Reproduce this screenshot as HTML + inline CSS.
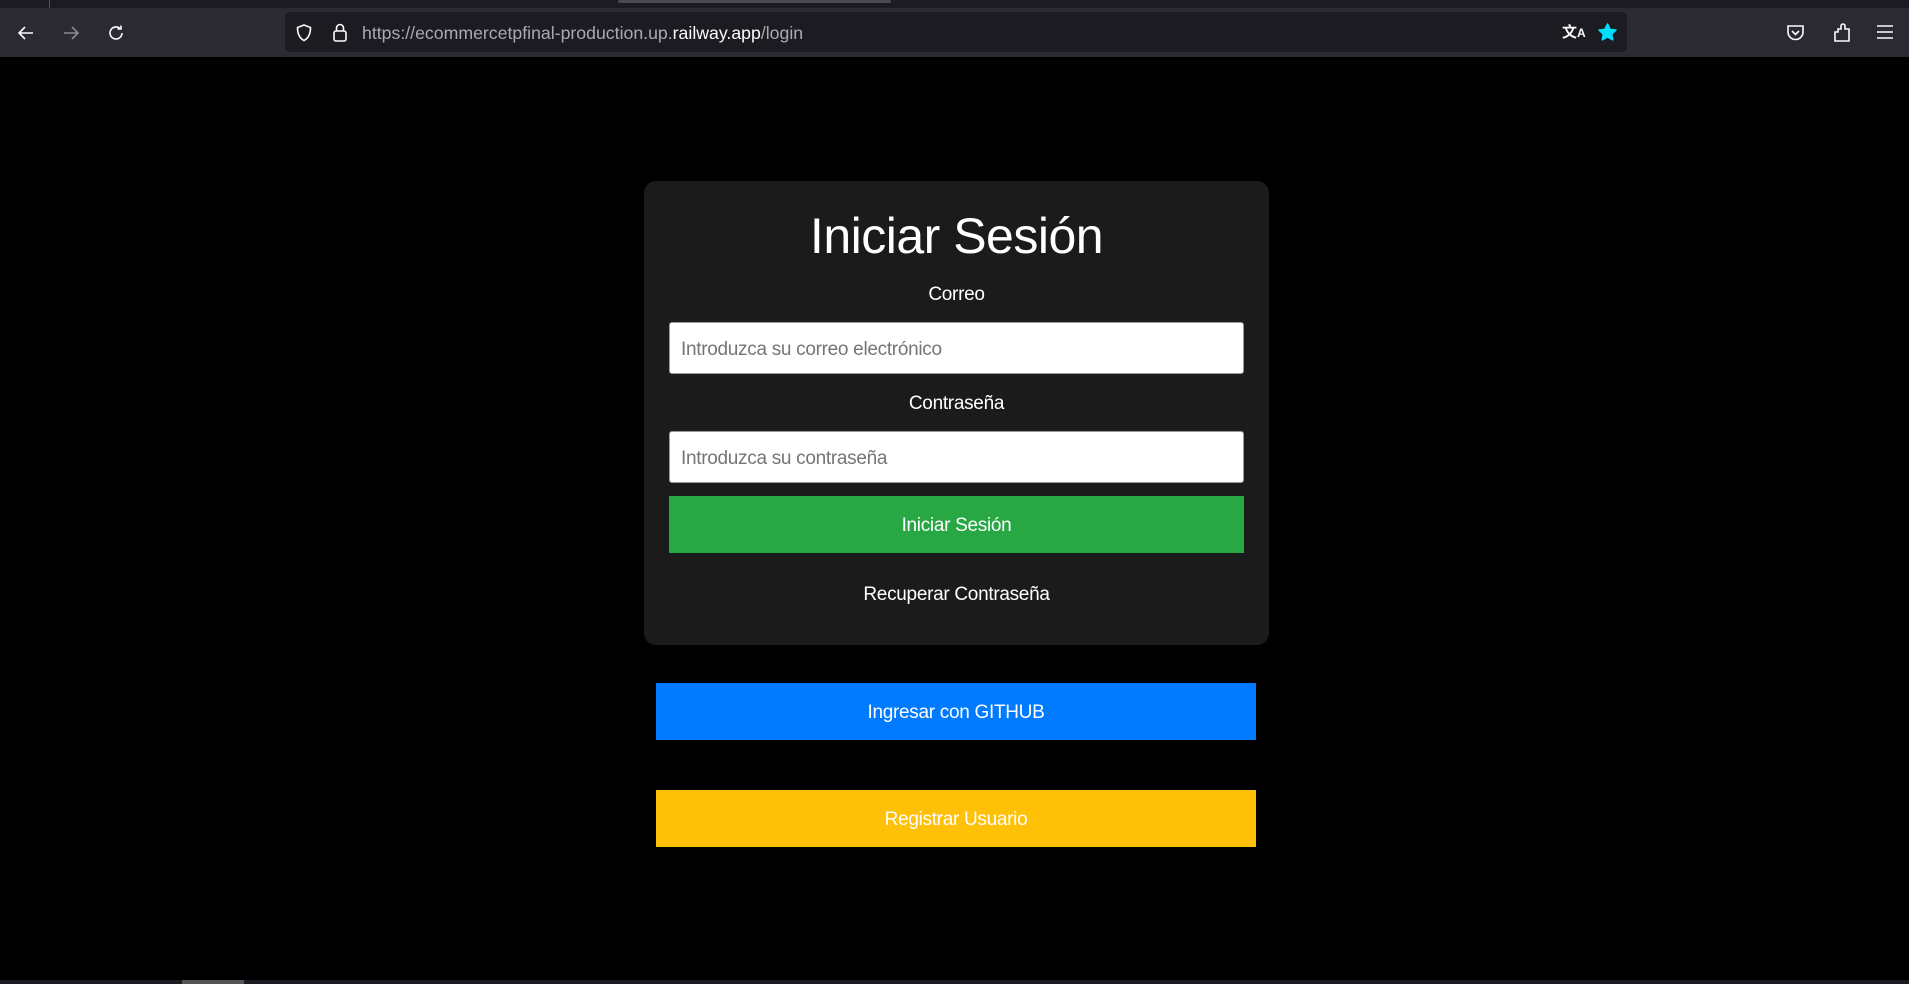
<!DOCTYPE html>
<html><head><meta charset="utf-8"><style>
*{box-sizing:border-box;margin:0;padding:0}
body{width:1909px;height:984px;background:#000;font-family:"Liberation Sans",Arial,sans-serif;position:relative;overflow:hidden}
.abs{position:absolute}
.top{left:0;top:0;width:1909px;height:8px;background:#1c1b22}
.tb{left:0;top:8px;width:1909px;height:49px;background:#2b2a33}
.url{left:285px;top:12px;width:1342px;height:40px;background:#1c1b22;border-radius:5px}
.urltext{left:362px;top:23px;font-size:17.7px;color:#a9a9b0;white-space:nowrap}
.urltext b{font-weight:normal;color:#fbfbfe}
svg{position:absolute}
.card{left:644px;top:181px;width:625px;height:464px;background:#1b1b1b;border-radius:12px}
.c{position:absolute;left:644px;width:625px;text-align:center;color:#fff}
.inp{left:669px;width:575px;height:52px;background:#fff;border:1px solid #999;border-radius:3px;font-size:19px;color:#757575;padding:16px 0 0 11px;letter-spacing:-0.3px}
.btn{color:#fff;font-size:19px;text-align:center;letter-spacing:-0.3px}
</style></head><body>
<div class="abs top"></div>
<div class="abs" style="left:618px;top:0;width:273px;height:3px;background:#4a4950;border-radius:2px"></div>
<div class="abs" style="left:49px;top:0;width:1px;height:8px;background:#555"></div>
<div class="abs tb"></div>
<div class="abs url"></div>
<svg style="left:16px;top:23px" width="20" height="20" viewBox="0 0 20 20" fill="none" stroke="#fbfbfe" stroke-width="1.6"><path d="M17 10H3M9 4L3 10l6 6"/></svg>
<svg style="left:61px;top:23px" width="20" height="20" viewBox="0 0 20 20" fill="none" stroke="#8a8990" stroke-width="1.6"><path d="M3 10h14M11 4l6 6-6 6"/></svg>
<svg style="left:106px;top:23px" width="20" height="20" viewBox="0 0 20 20" fill="none" stroke="#fbfbfe" stroke-width="1.6"><path d="M16 10a6 6 0 1 1-2-4.5M15 2.5v3.5h-3.5"/></svg>
<svg style="left:295px;top:23px" width="18" height="20" viewBox="0 0 18 20" fill="none" stroke="#fbfbfe" stroke-width="1.6"><path d="M9 2l6.5 2.5c0 7-2.5 11-6.5 13C5 15.5 2.5 11.5 2.5 4.5z"/></svg>
<svg style="left:332px;top:22px" width="16" height="21" viewBox="0 0 16 21" fill="none" stroke="#fbfbfe" stroke-width="1.6"><rect x="2" y="9" width="12" height="10" rx="2"/><path d="M4.5 9V6a3.5 3.5 0 0 1 7 0v3"/></svg>
<div class="abs urltext">https://ecommercetpfinal-production.up.<b>railway.app</b>/login</div>
<div class="abs" style="left:1562px;top:21px;color:#fbfbfe;font-size:15px;font-weight:bold;font-family:'Noto Sans CJK SC',sans-serif">文<span style="font-size:12px;font-family:'Liberation Sans'">A</span></div>
<svg style="left:1597px;top:22px" width="21" height="21" viewBox="0 0 24 24"><path fill="#00ddff" stroke="#00ddff" stroke-linejoin="round" stroke-width="2" d="M12 2.5l2.9 6 6.6.8-4.9 4.5 1.3 6.5L12 17l-5.9 3.3 1.3-6.5-4.9-4.5 6.6-.8z"/></svg>
<svg style="left:1786px;top:24px" width="19" height="18" viewBox="0 0 19 18" fill="none" stroke="#fbfbfe" stroke-width="1.6"><path d="M2 2h15v6a7.5 7.5 0 0 1-15 0z"/><path d="M6 7l3.5 3.5L13 7"/></svg>
<svg style="left:1832px;top:21px" width="20" height="22" viewBox="0 0 20 22" fill="none" stroke="#fbfbfe" stroke-width="1.6"><path d="M3 20V11h3V8h3V5a2 2 0 0 1 4 0v3h4v12z"/></svg>
<svg style="left:1876px;top:24px" width="18" height="16" viewBox="0 0 18 16" stroke="#fbfbfe" stroke-width="1.6"><path d="M1 2h16M1 8h16M1 14h16"/></svg>

<div class="abs card"></div>
<div class="c" style="top:207px;font-size:50px;line-height:58px;letter-spacing:-0.5px">Iniciar Sesión</div>
<div class="c" style="top:284px;font-size:19px;letter-spacing:-0.3px">Correo</div>
<div class="abs inp" style="top:322px">Introduzca su correo electrónico</div>
<div class="c" style="top:393px;font-size:19px;letter-spacing:-0.3px">Contraseña</div>
<div class="abs inp" style="top:431px">Introduzca su contraseña</div>
<div class="abs btn" style="left:669px;top:496px;width:575px;height:57px;background:#28a745;padding-top:19px">Iniciar Sesión</div>
<div class="c" style="top:584px;font-size:19px;letter-spacing:-0.3px">Recuperar Contraseña</div>
<div class="abs btn" style="left:656px;top:683px;width:600px;height:57px;background:#007bff;padding-top:19px">Ingresar con GITHUB</div>
<div class="abs btn" style="left:656px;top:790px;width:600px;height:57px;background:#ffc107;padding-top:19px">Registrar Usuario</div>
<div class="abs" style="left:0;top:980px;width:1909px;height:4px;background:#1c1b22"></div>
<div class="abs" style="left:182px;top:980px;width:62px;height:4px;background:#555"></div>
</body></html>
